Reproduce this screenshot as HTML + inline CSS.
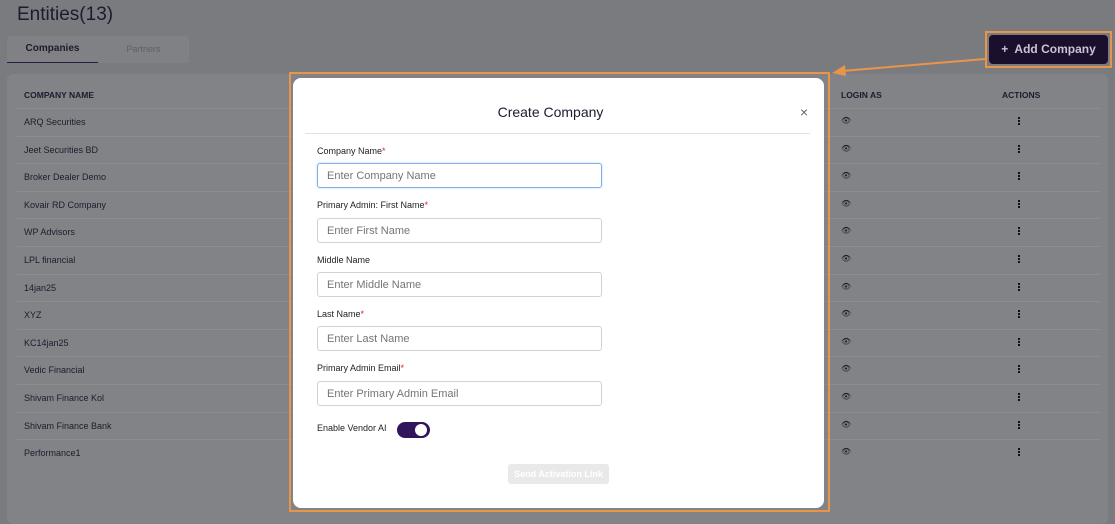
<!DOCTYPE html>
<html><head><style>
*{box-sizing:border-box;margin:0;padding:0}
body{width:1115px;height:516px;overflow:hidden;background:#7a7b7f;font-family:"Liberation Sans",sans-serif;position:relative}
.abs{position:absolute}
.t{font-size:9px;color:#1f1a2e}
.lbl{position:absolute;left:317px;font-size:9px;color:#222}
.lbl b{color:#e0202a;font-weight:normal}
.in{position:absolute;left:317px;width:285px;height:25px;border:1px solid #cfd3d8;border-radius:3px;font-size:11px;color:#757575;padding:6px 9px}
.row{position:absolute;left:17px;width:1083px;height:1px;background:#8c8d90}
</style></head><body>
<div class="abs" style="left:17px;top:4px;font-size:19px;color:#1f1a2e">Entities(13)</div>
<div class="abs" style="left:7px;top:36px;width:182px;height:27px;background:#808184;border-radius:4px 4px 0 0"></div>
<div class="abs" style="left:7px;top:36px;width:91px;height:27px;border-bottom:1px solid #2a1a45;font-size:10px;color:#1f1a2e;text-align:center;line-height:26px;font-weight:bold">Companies</div>
<div class="abs" style="left:98px;top:36px;width:91px;height:27px;font-size:9px;color:#5f6066;text-align:center;line-height:26px">Partners</div>
<div class="abs" style="left:7px;top:74px;width:1101px;height:450px;background:#828386;border-radius:6px"></div>
<div class="abs t" style="left:24px;top:90px;font-size:8.5px;font-weight:bold">COMPANY NAME</div>
<div class="abs t" style="left:841px;top:90px;font-size:8.5px;font-weight:bold">LOGIN AS</div>
<div class="abs t" style="left:1002px;top:90px;font-size:8.5px;font-weight:bold">ACTIONS</div>
<div id="rows"></div>
<script>
var n=["ARQ Securities","Jeet Securities BD","Broker Dealer Demo","Kovair RD Company","WP Advisors","LPL financial","14jan25","XYZ","KC14jan25","Vedic Financial","Shivam Finance Kol","Shivam Finance Bank","Performance1"];
var h="";for(var i=0;i<n.length;i++){var y=108+i*27.6;h+='<div class="row" style="top:'+y+'px"></div><div class="abs t" style="left:24px;top:'+(y+9)+'px">'+n[i]+'</div><div class="abs t" style="left:841px;top:'+(y+8)+'px;font-size:8px">&#128065;</div><div class="abs" style="left:1018px;top:'+(y+9)+'px;width:2px;height:8px;background:repeating-linear-gradient(#111 0 2px,transparent 2px 3px)"></div>';}
document.getElementById("rows").innerHTML=h;
</script>
<div class="abs" style="left:985px;top:31px;width:127px;height:37px;border:2px solid #e8954a"></div>
<div class="abs" style="left:989px;top:35px;width:119px;height:29px;background:#1c0f2e;border-radius:4px;color:#c9c4d4;font-size:12px;line-height:29px;text-align:center;font-weight:bold">+&nbsp; Add Company</div>
<svg class="abs" style="left:828px;top:58px" width="160" height="20"><line x1="157" y1="1" x2="14" y2="13" stroke="#e8954a" stroke-width="2"/><polygon points="4,15 17,7 18,18" fill="#e8954a"/></svg>
<div class="abs" style="left:289px;top:72px;width:541px;height:440px;border:2px solid #e8954a"></div>
<div class="abs" style="left:293px;top:78px;width:531px;height:430px;background:#fff;border-radius:8px"></div>
<div class="abs" style="left:293px;top:104px;width:511px;text-align:center;font-size:14px;color:#1f1a2e;padding-left:4px">Create Company</div>
<div class="abs" style="left:800px;top:104px;font-size:14px;color:#666">×</div>
<div class="abs" style="left:305px;top:133px;width:505px;height:1px;background:#e2e2e2"></div>
<div class="lbl" style="top:146px">Company Name<b>*</b></div>
<div class="in" style="top:163px;border:1.5px solid #80b0e8;box-shadow:0 0 2px #b8d4f4">Enter Company Name</div>
<div class="lbl" style="top:200px">Primary Admin: First Name<b>*</b></div>
<div class="in" style="top:218px">Enter First Name</div>
<div class="lbl" style="top:255px">Middle Name</div>
<div class="in" style="top:272px">Enter Middle Name</div>
<div class="lbl" style="top:309px">Last Name<b>*</b></div>
<div class="in" style="top:326px">Enter Last Name</div>
<div class="lbl" style="top:363px">Primary Admin Email<b>*</b></div>
<div class="in" style="top:381px">Enter Primary Admin Email</div>
<div class="lbl" style="top:423px">Enable Vendor AI</div>
<div class="abs" style="left:397px;top:422px;width:33px;height:16px;background:#30155a;border-radius:8px"><div class="abs" style="left:18px;top:2px;width:12px;height:12px;background:#fff;border-radius:50%"></div></div>
<div class="abs" style="left:508px;top:464px;width:101px;height:20px;background:#e9e9e9;border-radius:3px;color:#fff;font-size:9px;line-height:20px;text-align:center;font-weight:bold">Send Activation Link</div>
</body></html>
